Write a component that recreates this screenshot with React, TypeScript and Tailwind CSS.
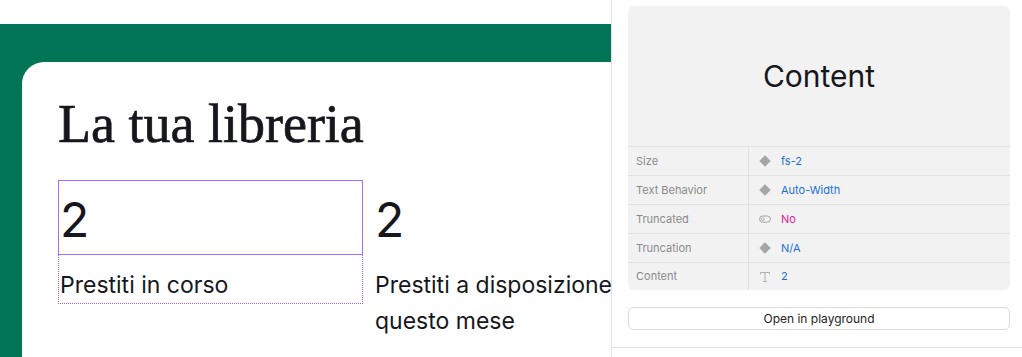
import React from "react";

function Diamond() {
  return (
    <svg width="12" height="12" viewBox="0 0 12 12" className="shrink-0">
      <path d="M6 0.3 L11.7 6 L6 11.7 L0.3 6 Z" fill="#a6a6a6" />
    </svg>
  );
}

function ToggleIcon() {
  return (
    <svg width="12" height="12" viewBox="0 0 12 12" className="shrink-0">
      <rect x="0.5" y="3" width="11" height="6.2" rx="3.1" fill="none" stroke="#a6a6a6" strokeWidth="1" />
      <circle cx="3.7" cy="6.1" r="1.5" fill="none" stroke="#a6a6a6" strokeWidth="0.9" />
    </svg>
  );
}

function TIcon() {
  return (
    <svg width="12" height="12" viewBox="0 0 12 12" className="shrink-0">
      <path d="M1.5 3.2 V1.5 H10.5 V3.2 M6 1.5 V10.5 M4.3 10.5 H7.7" fill="none" stroke="#a6a6a6" strokeWidth="0.9" />
    </svg>
  );
}

const rows: { label: string; icon: React.ReactNode; value: string; pink?: boolean }[] = [
  { label: "Size", icon: <Diamond />, value: "fs-2" },
  { label: "Text Behavior", icon: <Diamond />, value: "Auto-Width" },
  { label: "Truncated", icon: <ToggleIcon />, value: "No", pink: true },
  { label: "Truncation", icon: <Diamond />, value: "N/A" },
  { label: "Content", icon: <TIcon />, value: "2" },
];

export default function App() {
  return (
    <div className="flex w-[1022px] h-[357px] overflow-hidden bg-white" style={{ fontFamily: "Inter, 'Noto Sans', sans-serif" }}>
      {/* Left preview */}
      <div className="w-[611px] shrink-0 h-full overflow-hidden flex flex-col">
        <div className="h-[24px] shrink-0 bg-white" />
        <div className="flex-1 bg-[#017556] pt-[38px] pl-[22px]">
          <div className="w-[700px] h-full bg-white rounded-tl-[22px] pl-[36px] pt-[36px]">
            <h1
              className="text-[54px] leading-[53px] text-[#16171d] m-0 font-normal [-webkit-text-stroke:0.7px_#16171d]"
              style={{ fontFamily: "'Liberation Serif', 'DejaVu Serif', serif" }}
            >
              La tua libreria
            </h1>
            <div className="flex gap-[12px] mt-[29px]">
              <div className="w-[305px] shrink-0 flex flex-col">
                <div className="h-[75px] border border-solid border-[#a66bff] pt-[3px] pl-[1px] text-[48px] leading-[72px] text-[#16171d]">
                  2
                </div>
                <div className="h-[49px] border-l border-r border-b border-dotted border-[#9d5cff] pl-[1px] pt-[12px] text-[23px] leading-[36px] text-[#16171d]">
                  Prestiti in corso
                </div>
              </div>
              <div className="w-[260px] shrink-0 flex flex-col">
                <div className="h-[75px] pt-[4px] text-[48px] leading-[72px] text-[#16171d]">2</div>
                <div className="pt-[12px] text-[23px] leading-[36px] text-[#16171d] whitespace-nowrap">
                  Prestiti a disposizione
                  <br />
                  questo mese
                </div>
              </div>
            </div>
          </div>
        </div>
      </div>

      {/* Right panel */}
      <div className="flex-1 h-full border-l border-[#e2e2e2] flex flex-col">
        <div className="pl-[16px] pr-[12px] pt-[6px]">
          <div className="bg-[#f2f2f2] rounded-[6px] overflow-hidden">
            <div className="h-[140px] flex items-center justify-center text-[30px] text-[#16171d]">
              Content
            </div>
            {rows.map((r, i) => (
              <div key={r.label} className={`flex border-t border-[#e2e2e2] ${i === rows.length - 1 ? "h-[28px]" : "h-[29px]"}`}>
                <div className="w-[121px] shrink-0 border-r border-[#e2e2e2] pl-[8px] flex items-center text-[11px] text-[#8a8a8a]">
                  {r.label}
                </div>
                <div className="flex items-center pl-[10px] gap-[10px] text-[11px]">
                  {r.icon}
                  <span className={r.pink ? "text-[#e5189a]" : "text-[#1a6fdc]"}>{r.value}</span>
                </div>
              </div>
            ))}
          </div>
          <button className="mt-[17px] w-full h-[23px] bg-white border border-[#dcdcdc] rounded-[5px] text-[12px] text-[#222] flex items-center justify-center">
            Open in playground
          </button>
        </div>
        <div className="mt-[17px] border-t border-[#e2e2e2]" />
      </div>
    </div>
  );
}
